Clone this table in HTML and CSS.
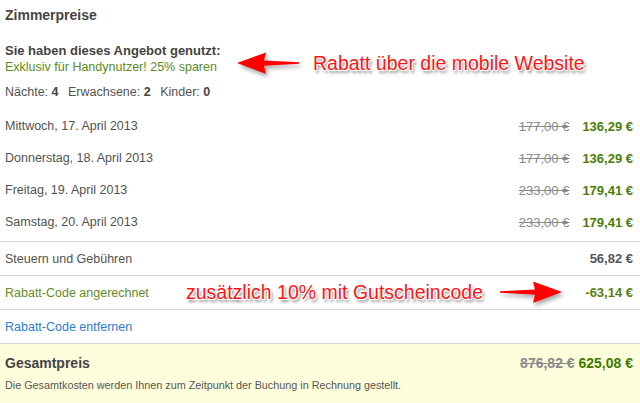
FILE: index.html
```html
<!DOCTYPE html>
<html lang="de">
<head>
  <meta charset="UTF-8">
  <title>Zimmerpreise</title>
  <link rel="stylesheet" href="styles.css">
</head>
<body>

  <div class="panel">
    <h2 class="title">Zimmerpreise</h2>

    <div class="offer">
      <div class="offer-label">Sie haben dieses Angebot genutzt:</div>
      <div class="offer-name">Exklusiv für Handynutzer! 25% sparen</div>
    </div>

    <div class="guests">
      Nächte: <b>4</b> Erwachsene: <b>2</b> Kinder: <b>0</b>
    </div>

    <!-- Preise pro Nacht -->
    <div class="nights">
      <div class="night">
        <span>Mittwoch, 17. April 2013</span>
        <span class="prices"><s>177,00 €</s><b>136,29 €</b></span>
      </div>
      <div class="night">
        <span>Donnerstag, 18. April 2013</span>
        <span class="prices"><s>177,00 €</s><b>136,29 €</b></span>
      </div>
      <div class="night">
        <span>Freitag, 19. April 2013</span>
        <span class="prices"><s>233,00 €</s><b>179,41 €</b></span>
      </div>
      <div class="night">
        <span>Samstag, 20. April 2013</span>
        <span class="prices"><s>233,00 €</s><b>179,41 €</b></span>
      </div>
    </div>

    <div class="line">
      <span>Steuern und Gebühren</span>
      <b class="amount">56,82 €</b>
    </div>
    <div class="line discount">
      <span>Rabatt-Code angerechnet</span>
      <b class="amount">-63,14 €</b>
    </div>
    <div class="line">
      <a href="#" class="remove">Rabatt-Code entfernen</a>
    </div>

    <div class="total">
      <div class="total-row">
        <span class="total-label">Gesamtpreis</span>
        <span class="total-prices"><s>876,82 €</s> <b>625,08 €</b></span>
      </div>
      <div class="total-note">Die Gesamtkosten werden Ihnen zum Zeitpunkt der Buchung in Rechnung gestellt.</div>
    </div>

    <!-- Hinweise im Screenshot -->
    <div class="callout callout-mobile">
      <svg class="arrow" width="62" height="24" viewBox="0 0 62 24">
        <path d="M62 11.3 L27 9.4 L29 1.5 L0 12 L29 23 L27 14.8 L62 12.7 Z" fill="#ff0000"/>
      </svg>
      <span class="callout-text">Rabatt über die mobile Website</span>
    </div>
    <div class="callout callout-code">
      <span class="callout-text">zusätzlich 10% mit Gutscheincode</span>
      <svg class="arrow" width="62" height="24" viewBox="0 0 62 24">
        <path d="M0 11.3 L35 9.4 L33 1.5 L62 12 L33 23 L35 14.8 L0 12.7 Z" fill="#ff0000"/>
      </svg>
    </div>
  </div>

</body>
</html>
```

FILE: styles.css
```css
body {
  margin: 0;
  font-family: "Liberation Sans", Arial, sans-serif;
  font-size: 12.5px;
  color: #525252;
  background: white;
}

.panel {
  position: relative;
  padding-top: 6px;
}

.title {
  margin: 0;
  padding: 0 5px;
  font-size: 14px;
  line-height: 18px;
  color: #444;
}

.offer {
  margin-top: 18px;
  padding: 0 5px;
  line-height: 17px;
}

.offer-label {
  font-size: 13px;
  font-weight: bold;
  color: #444;
}

.offer-name {
  color: #5a8c1c;
}

.guests {
  margin-top: 8px;
  padding: 0 5px;
  line-height: 16px;
}

.guests b {
  color: #444;
  margin-right: 6px;
}

.nights {
  margin-top: 10px;
  margin-bottom: 3px;
}

.night,
.line {
  display: flex;
  justify-content: space-between;
  align-items: center;
  padding: 0 7px 0 5px;
}

.night {
  height: 32px;
}

.line {
  height: 33px;
  border-top: 1px solid #d6d6d6;
}

.prices {
  font-size: 13px;
}

.prices s {
  color: #8a8a8a;
  margin-right: 13px;
}

.prices b {
  color: #4b7d06;
}

.amount {
  font-size: 13px;
  color: #555;
}

.discount {
  color: #648c25;
}

.discount .amount {
  color: #5b7f10;
}

.remove {
  color: #2d7dd2;
  text-decoration: none;
}

.total {
  border-top: 1px solid #d6d6d6;
  background: #fffedc;
  padding: 10px 7px 11px 5px;
}

.total-row {
  display: flex;
  justify-content: space-between;
  align-items: center;
  line-height: 18px;
  font-weight: bold;
  font-size: 14px;
}

.total-label {
  color: #444;
}

.total-prices s {
  color: #8a8a8a;
}

.total-prices b {
  color: #3f7a00;
}

.total-note {
  margin-top: 6px;
  font-size: 10.8px;
  line-height: 14px;
  color: #555;
}

/* annotations */
.callout {
  position: absolute;
  display: flex;
  align-items: center;
}

.callout-mobile {
  left: 237px;
  top: 51px;
}

.callout-code {
  left: 186px;
  top: 280px;
}

.callout-text {
  font-size: 19.5px;
  line-height: 24px;
  color: #ff1414;
  text-shadow:
    1px 0 0 #fff, -1px 0 0 #fff, 0 1px 0 #fff, 0 -1px 0 #fff,
    1px 1px 0 #fff, -1px -1px 0 #fff,
    2px 3px 3px rgba(0,0,0,0.5);
}

.callout-mobile .callout-text {
  margin-left: 14px;
}

.callout-code .callout-text {
  margin-right: 17px;
}

.arrow {
  filter: drop-shadow(2px 3px 2px rgba(0,0,0,0.35));
}
```
